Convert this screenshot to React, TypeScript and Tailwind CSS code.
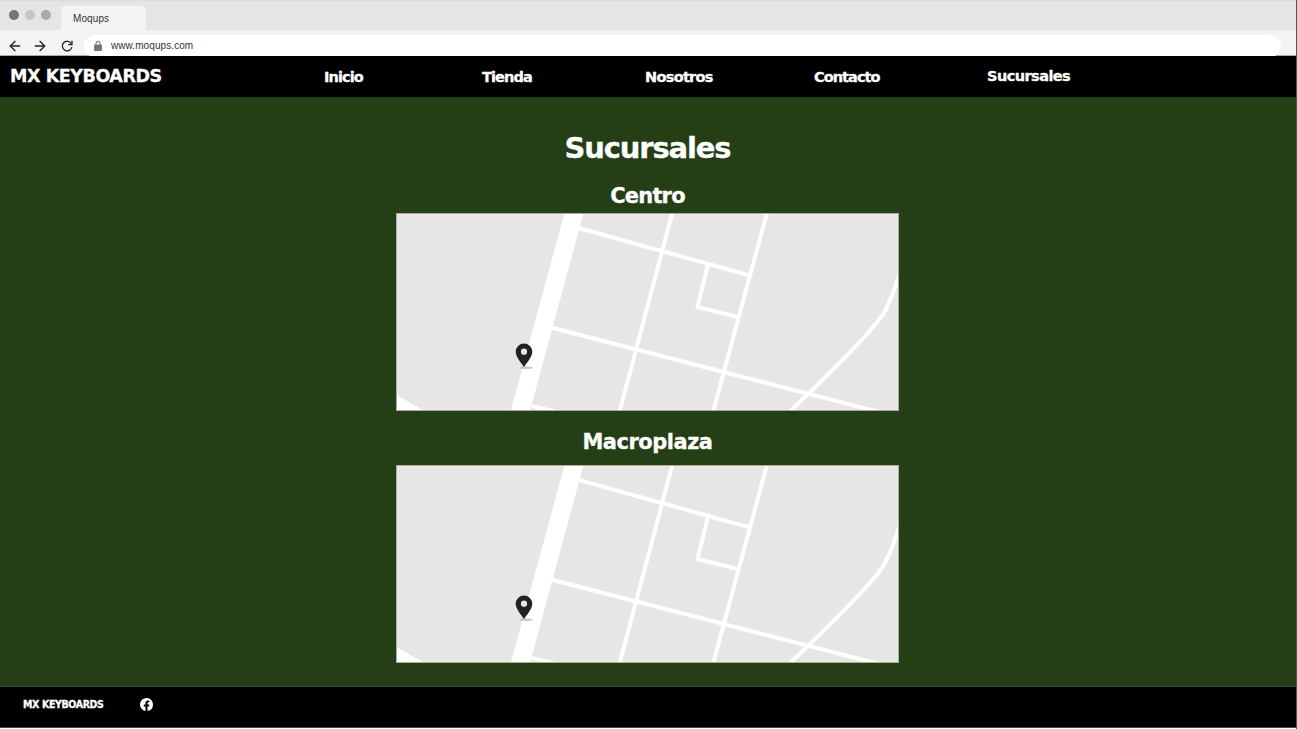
import { ArrowLeft, ArrowRight } from "lucide-react";

const display = "[font-family:'DejaVu_Sans',sans-serif] font-bold text-white whitespace-nowrap [-webkit-text-stroke:0.3px_white]";

function BrowserBar() {
  return (
    <header className="h-14 bg-[#f3f3f3] border-b border-[#a8a8a8] text-[#333] [font-family:'Liberation_Sans',sans-serif]">
      <div className="flex h-[30px] bg-[#e5e5e5] border-t border-[#dadada]">
        <div className="-mt-px flex w-[61px] items-center gap-[6px] pl-[9px]">
          <span className="size-[10px] rounded-full bg-[#737373]" />
          <span className="size-[10px] rounded-full bg-[#c5c5c5]" />
          <span className="size-[10px] rounded-full bg-[#aaaaaa]" />
        </div>
        <div className="mt-[5px] w-[85px] rounded-t-[4px] bg-[#f3f3f3] pl-3 pt-[6px] text-[10px] leading-[14px] tracking-[0.1px]">
          Moqups
        </div>
      </div>
      <div className="flex h-[25px] items-center pr-[15px] pt-[6px]">
        <div className="flex w-[84px] items-center pl-[7px]">
          <ArrowLeft className="size-4 text-[#222]" strokeWidth={2} />
          <ArrowRight className="ml-[9px] size-4 text-[#222]" strokeWidth={2} />
          <svg className="ml-[13px] size-[12px]" viewBox="0 0 12 12" fill="none" stroke="#222" strokeWidth="1.3">
            <path d="M10.3 3.6A4.8 4.8 0 1 0 10.9 7" />
            <path d="M11 .8v3.8H7.2" />
          </svg>
        </div>
        <div className="flex h-[22px] flex-1 items-center rounded-full bg-white pl-[10px] text-[10px] tracking-[0.08px]">
          <svg className="mr-[9px] h-[10px] w-2" viewBox="0 0 8 10">
            <rect y="3.5" width="8" height="6.5" rx="1" fill="#777" />
            <path d="M2 4V2.5a2 2 0 0 1 4 0V4" fill="none" stroke="#777" strokeWidth="1.1" />
          </svg>
          www.moqups.com
        </div>
      </div>
    </header>
  );
}

function StreetMap({ label }: { label: string }) {
  return (
    <svg role="img" aria-label={label} className="block h-[198px] w-[503px] shrink-0 border border-[#a7b0a2] bg-[#e6e6e6]" viewBox="1 1 501 196">
      <path d="M168.5 0H187.5L134 198H114.7ZM0 182L29 198H0Z" fill="#fff" />
      <g fill="none" stroke="#fff" strokeWidth="4">
        <path d="M181 14.5L354 62.5M155 114.5L485 199.5M276.5 -1L223.5 199M371.2 -1L317 199" />
        <path d="M312 51.5L301.5 94L342 104M136 193L162 199.5" />
        <path d="M504 60Q496 84 489 98C481 113 443 151 412 181L392 200" />
      </g>
      <ellipse cx="130.5" cy="154.8" rx="6.5" ry="1.5" fill="#000" opacity=".2" />
      <path fillRule="evenodd" d="M128 154.3C126 150.6 119.7 144.2 119.7 138.8A8.3 8.3 0 0 1 136.3 138.8C136.3 144.2 130 150.6 128 154.3ZM128 135.6A3.1 3.1 0 1 0 128 141.8A3.1 3.1 0 1 0 128 135.6Z" fill="#222" />
    </svg>
  );
}

export default function App() {
  return (
    <div className="flex h-[729px] w-[1297px] flex-col overflow-hidden border-r border-[#555] bg-[#243e16]">
      <BrowserBar />
      <nav className={`flex h-[41px] shrink-0 bg-black text-[14.5px] leading-5 ${display}`}>
        <div className="w-[324px] pl-[10px] pt-[9px] text-[17.5px] leading-[22px] tracking-[-0.45px]">MX KEYBOARDS</div>
        <a className="w-[158px] pt-[11px] tracking-[-0.9px]">Inicio</a>
        <a className="w-[163px] pt-[11px] tracking-[-0.9px]">Tienda</a>
        <a className="w-[169px] pt-[11px] tracking-[-0.7px]">Nosotros</a>
        <a className="w-[173px] pt-[11px] tracking-[-0.95px]">Contacto</a>
        <a className="pt-[10px] tracking-[-0.55px]">Sucursales</a>
      </nav>
      <main className="flex h-[589px] shrink-0 flex-col items-center pr-px">
        <h1 className={`mt-[31px] h-10 text-[29px] leading-10 tracking-[-1.15px] ${display}`}>Sucursales</h1>
        <h2 className={`mt-[13px] h-8 text-[21px] leading-[30px] tracking-[-0.8px] ${display}`}>Centro</h2>
        <StreetMap label="Centro" />
        <h2 className={`mt-[15px] h-[39px] text-[21px] leading-[33px] tracking-[-0.5px] ${display}`}>Macroplaza</h2>
        <StreetMap label="Macroplaza" />
      </main>
      <footer className="flex h-[42px] shrink-0 border-y border-[#444] bg-black pl-[23px]">
        <span className={`w-[117px] pt-[9px] text-[10.5px] leading-4 tracking-[-0.35px] [font-stretch:condensed] ${display}`}>MX KEYBOARDS</span>
        <svg className="mt-[11px] size-[13px]" viewBox="0 0 24 24" fill="#fff">
          <path d="M24 12a12 12 0 1 0-13.9 11.85v-8.38H7.05V12h3.05V9.36c0-3 1.8-4.67 4.54-4.67 1.3 0 2.67.23 2.67.23v2.95h-1.5c-1.5 0-1.95.93-1.95 1.88V12h3.33l-.53 3.47h-2.8v8.38A12 12 0 0 0 24 12z" />
        </svg>
      </footer>
      <div className="h-px shrink-0 bg-white" />
    </div>
  );
}
